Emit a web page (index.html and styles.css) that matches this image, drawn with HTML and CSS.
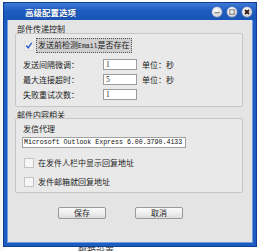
FILE: index.html
```html
<!DOCTYPE html>
<html>
<head>
<meta charset="utf-8">
<link rel="stylesheet" href="styles.css">
</head>
<body>
<div class="page">
  <div class="bg-mark">ト</div>
  <div class="bg-text">邮箱设置</div>
</div>
<div class="window">
  <div class="titlebar">
    <span class="title">高级配置选项</span>
    <div class="tb-btns">
      <span class="tb-btn"><svg width="10" height="10" viewBox="0 0 10 10"><rect x="2.5" y="5" width="5" height="1.4" fill="#8a8a8a"/></svg></span>
      <span class="tb-btn"><svg width="10" height="10" viewBox="0 0 10 10"><rect x="2.8" y="2.8" width="4.4" height="4.4" fill="none" stroke="#8a8a8a" stroke-width="1.2"/></svg></span>
      <span class="tb-btn"><svg width="10" height="10" viewBox="0 0 10 10"><path d="M3 3 L7 7 M7 3 L3 7" stroke="#3a1a1a" stroke-width="1.8"/></svg></span>
    </div>
  </div>
  <div class="body">
    <div class="group-label">部件传递控制</div>
    <div class="group g1">
      <div class="chk-row">
        <span class="chk chk-on"><svg width="9" height="9" viewBox="0 0 9 9"><path d="M1.5 4.5 L3.6 7 L7.5 1.5" fill="none" stroke="#2a5fc8" stroke-width="1.6"/></svg></span>
        <span class="chk-label focus">发送前检测<span class="mono">Email</span>是否存在</span>
      </div>
      <div class="field-row first">
        <span class="field-name">发送间隔微调：</span>
        <span class="num-input">1</span>
        <span class="unit">单位：秒</span>
      </div>
      <div class="field-row">
        <span class="field-name">最大连接超时：</span>
        <span class="num-input">5</span>
        <span class="unit">单位：秒</span>
      </div>
      <div class="field-row">
        <span class="field-name">失败重试次数：</span>
        <span class="num-input">1</span>
      </div>
    </div>
    <div class="group-label second">邮件内容相关</div>
    <div class="group g2">
      <div class="sub-label">发信代理</div>
      <div class="agent-input">Microsoft Outlook Express 6.00.3790.4133</div>
      <div class="chk-row c2">
        <span class="chk"></span>
        <span class="chk-label">在发件人栏中显示回复地址</span>
      </div>
      <div class="chk-row c3">
        <span class="chk"></span>
        <span class="chk-label">发件邮箱就回复地址</span>
      </div>
    </div>
    <div class="buttons">
      <span class="btn">保存</span>
      <span class="btn">取消</span>
    </div>
  </div>
</div>
</body>
</html>
```
FILE: styles.css
```css
html, body {
  margin: 0;
  padding: 0;
  background: #ffffff;
  width: 260px;
  height: 251px;
  overflow: hidden;
  font-family: "Noto Sans CJK SC", "Noto Sans", sans-serif;
}
.page {
  width: 260px;
  height: 251px;
  background: linear-gradient(90deg, #f4f4f4 0, #ffffff 6px);
  display: flex;
  flex-direction: column;
}
.bg-mark {
  margin-top: 225px;
  margin-left: 1px;
  font-size: 9px;
  line-height: 11px;
  color: #333;
}
.bg-text {
  margin-top: 9px;
  margin-left: 78px;
  font-size: 9px;
  line-height: 11px;
  color: #333;
}
.window {
  position: absolute;
  left: 4px;
  top: 3px;
  width: 246px;
  height: 240px;
  border: 3px solid #1d5cc0;
  border-top: 0;
  background: #e4e4e4;
  box-shadow: inset 0 0 0 1px #6f9be0, 0 0 0 1px #0f3f95;
  display: flex;
  flex-direction: column;
}
.titlebar {
  height: 17px;
  margin: 0 -3px;
  padding: 0 4px 0 21px;
  background: linear-gradient(180deg, #3f7ad6 0, #1f5cc0 45%, #1a55b6 100%);
  display: flex;
  align-items: center;
  justify-content: space-between;
  border-radius: 3px 3px 0 0;
}
.title {
  color: #ffffff;
  font-size: 8.5px;
  font-weight: bold;
  line-height: 10px;
  margin-top: 1px;
  font-family: "Noto Sans CJK SC", "Noto Serif CJK SC", serif;
  text-shadow: 0 0 1px #0b2d70;
}
.tb-btns {
  display: flex;
  gap: 5px;
}
.tb-btn {
  width: 10px;
  height: 10px;
  border-radius: 50%;
  background: radial-gradient(circle at 40% 35%, #ffffff 0, #e6e6e6 45%, #b9b9b9 100%);
  box-shadow: 0 0 0 0.5px #7a8fb8;
  display: flex;
}
.body {
  flex: 1;
  padding: 4px 10px 0 8px;
  display: flex;
  flex-direction: column;
  font-size: 8px;
  color: #1a1a1a;
}
.group-label {
  height: 9px;
  line-height: 9px;
  font-size: 8px;
  margin-left: 2px;
  color: #222;
}
.group-label.second {
  margin-top: 3px;
}
.group {
  border: 1px solid #c6c6c6;
  background: #e9e9e9;
  border-radius: 2px;
  display: flex;
  flex-direction: column;
  padding: 0 7px;
}
.g1 {
  height: 72px;
  padding-top: 5px;
  box-sizing: border-box;
  height: 74px;
}
.g2 {
  margin-top: -1px;
  height: 75px;
  box-sizing: border-box;
  padding-top: 5px;
}
.chk-row {
  display: flex;
  align-items: center;
  height: 13px;
  gap: 2px;
}
.chk {
  width: 8px;
  height: 8px;
  border: 1px solid #c4c4c4;
  background: #f6f6f6;
  margin-left: 1px;
  display: flex;
  align-items: center;
  justify-content: center;
}
.chk-on {
  border-color: #e0e0e0;
  background: #ededed;
}
.chk-label {
  font-size: 8px;
  line-height: 11px;
  padding: 0 1px;
  color: #1a1a1a;
}
.chk-label.focus {
  background: #cfcfcf;
  outline: 1px dotted #555;
  outline-offset: -1px;
  padding: 1px 2px;
}
.mono {
  font-family: "Liberation Mono", "DejaVu Sans Mono", monospace;
  font-size: 6.5px;
}
.field-row {
  display: flex;
  align-items: center;
  height: 11px;
  margin-top: 4px;
}
.field-row.first {
  margin-top: 7px;
}
.field-name {
  width: 80px;
  line-height: 11px;
  font-size: 8px;
}
.num-input {
  width: 31px;
  height: 9px;
  border: 1px solid #9c9c9c;
  background: #ffffff;
  font-family: "Liberation Serif", serif;
  font-size: 7.5px;
  line-height: 9px;
  padding-left: 2px;
  box-sizing: content-box;
  width: 30px;
}
.unit {
  margin-left: 5px;
  line-height: 11px;
}
.sub-label {
  height: 9px;
  line-height: 9px;
}
.agent-input {
  margin-top: 4px;
  margin-left: -1px;
  width: 161px;
  height: 9px;
  border: 1px solid #a0a0a0;
  background: #ffffff;
  font-family: "Liberation Mono", "DejaVu Sans Mono", monospace;
  font-size: 6.6px;
  line-height: 9px;
  padding-left: 1px;
  white-space: nowrap;
  overflow: hidden;
  color: #111;
}
.chk-row.c2 {
  margin-top: 9px;
  height: 11px;
}
.chk-row.c3 {
  margin-top: 8px;
  height: 11px;
}
.g2 .chk-row {
  gap: 3px;
}
.buttons {
  display: flex;
  gap: 29px;
  margin-top: 14px;
  padding-left: 43px;
}
.btn {
  width: 46px;
  height: 10px;
  border: 1px solid #9a9a9a;
  border-radius: 2px;
  background: linear-gradient(180deg, #fbfbfb 0, #ececec 60%, #dcdcdc 100%);
  font-size: 8px;
  line-height: 10px;
  text-align: center;
  color: #222;
}
```
